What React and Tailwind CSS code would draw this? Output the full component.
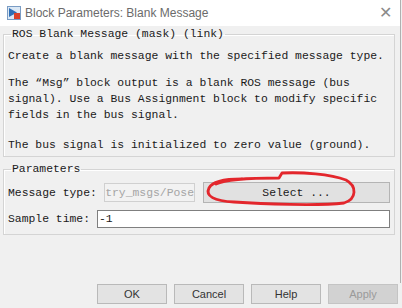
import React from "react";

// Simulink "Block Parameters" dialog for the ROS Blank Message block

const MONO = "font-['Liberation_Mono','DejaVu_Sans_Mono',monospace] text-[11.4px] leading-[16px] text-[#1a1a1a]";

function BlockIcon() {
  return (
    <svg width="14" height="14" viewBox="0 0 14 14">
      <rect x="0.5" y="0.5" width="13" height="13" fill="#dbe8f5" stroke="#7a9cc4" />
      <path d="M2 2 L10 6.5 L2 11 Z" fill="#2f6fb5" />
      <rect x="7" y="7" width="6" height="6" fill="#d9412b" />
    </svg>
  );
}

function GroupBox({ title, className, children }) {
  return (
    <fieldset className={`border border-[#d4d4d4] shadow-[inset_1px_1px_0_#ffffff] ${className}`}>
      <legend className={`ml-[3px] px-[1px] ${MONO}`}>{title}</legend>
      {children}
    </fieldset>
  );
}

function DialogButton({ label, disabled }) {
  return (
    <button
      className={`w-[70px] h-[20px] border font-['Liberation_Sans',Arial,sans-serif] text-[11px] ${
        disabled
          ? "bg-[#d2d2d2] border-[#c4c4c4] text-[#9a9a9a]"
          : "bg-[#e3e3e3] border-[#b9b9b9] text-[#333]"
      }`}
    >
      {label}
    </button>
  );
}

export default function App() {
  return (
    <div className="relative w-[402px] h-[308px] overflow-hidden bg-[#f0f0f0]">
      <div className="w-[401px] h-[283px] border-r border-[#b0b0b0] flex flex-col">
        {/* Title bar */}
        <div className="h-[26px] shrink-0 bg-white flex items-center pl-[7px] pr-[8px]">
          <BlockIcon />
          <span className="ml-[4px] font-['Liberation_Sans',Arial,sans-serif] text-[12px] text-[#6b6b6b]">
            Block Parameters: Blank Message
          </span>
          <span className="ml-auto text-[16px] leading-none font-['DejaVu_Sans',sans-serif] font-light text-[#8a8a8a]">
            ✕
          </span>
        </div>

        {/* Description */}
        <GroupBox title="ROS Blank Message (mask) (link)" className="ml-[3px] mr-[5px] px-[4px] pt-[6px] pb-[3px]">
          <p className={MONO}>Create a blank message with the specified message type.</p>
          <p className={`mt-[11px] ${MONO}`}>
            The “Msg” block output is a blank ROS message (bus
            <br />
            signal). Use a Bus Assignment block to modify specific
            <br />
            fields in the bus signal.
          </p>
          <p className={`mt-[14px] ${MONO}`}>The bus signal is initialized to zero value (ground).</p>
        </GroupBox>

        {/* Parameters */}
        <GroupBox title="Parameters" className="mt-[4px] ml-[3px] mr-[5px] pl-[4px] pr-[4px] pt-[5px] pb-[6px]">
          <div className="flex items-center h-[21px]">
            <span className={`w-[96px] shrink-0 ${MONO}`}>Message type:</span>
            <div className="w-[91px] h-[19px] border border-[#d0d0d0] bg-[#f2f2f2] flex justify-end items-center">
              <span className={`whitespace-nowrap ${MONO} text-[#a5a5a5]`}>try_msgs/Pose</span>
            </div>
            <button className={`ml-[8px] flex-1 h-[21px] bg-[#e1e1e1] border border-[#b4b4b4] ${MONO}`}>
              Select ...
            </button>
          </div>
          <div className="mt-[7px] flex items-center h-[18px]">
            <span className={`w-[89px] shrink-0 ${MONO}`}>Sample time:</span>
            <div className="flex-1 h-[18px] bg-white border border-[#7f7f7f] flex items-center pl-[1px]">
              <span className={MONO}>-1</span>
            </div>
          </div>
        </GroupBox>

        {/* Dialog buttons */}
        <div className="mt-auto mb-[-21px] ml-[97px] flex gap-[7px]">
          <DialogButton label="OK" />
          <DialogButton label="Cancel" />
          <DialogButton label="Help" />
          <DialogButton label="Apply" disabled />
        </div>
      </div>

      {/* Red hand-drawn annotation around Select */}
      <svg className="absolute inset-0 pointer-events-none" width="402" height="308">
        <path
          d="M216 184 C226 179 255 178 279 178 L282 173 C302 172 330 174 346 180 C357 186 357 199 344 203 C318 206 262 204 234 202 C214 201 205 196 209 188 C212 182 224 179 242 179"
          fill="none"
          stroke="#e3262c"
          strokeWidth="2.8"
          strokeLinecap="round"
          strokeLinejoin="round"
        />
      </svg>
    </div>
  );
}
